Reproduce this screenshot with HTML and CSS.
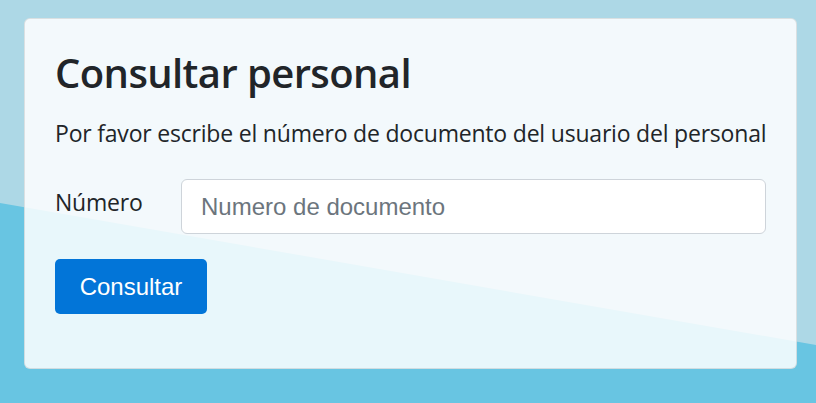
FILE: index.html
```html
<!DOCTYPE html>
<html lang="es">
<head>
<meta charset="utf-8">
<title>Consultar personal</title>
<link rel="stylesheet" href="styles.css">
</head>
<body>
<main class="page">
  <section class="card">
    <h1 class="title">Consultar personal</h1>
    <p class="lead">Por favor escribe el número de documento del usuario del personal</p>
    <form class="form">
      <div class="row">
        <label class="label" for="num">Número</label>
        <input class="input" id="num" type="text" placeholder="Numero de documento">
      </div>
      <button class="btn" type="button">Consultar</button>
    </form>
  </section>
</main>
</body>
</html>
```

FILE: styles.css
```css
html, body {
  margin: 0;
  padding: 0;
  height: 100%;
}
body {
  background-color: #add8e6;
  font-family: "Open Sans", "Noto Sans", sans-serif;
  color: #212529;
  overflow: hidden;
}
.page {
  position: relative;
  height: 403px;
  padding: 18px 19px 0 24px;
  box-sizing: border-box;
  background: #add8e6;
}
.page::before {
  content: "";
  position: absolute;
  left: 0;
  right: 0;
  bottom: 0;
  top: 0;
  background: #68c5e2;
  clip-path: polygon(0 203px, 100% 345px, 100% 100%, 0 100%);
}
.card {
  position: relative;
  background: rgba(255, 255, 255, 0.85);
  border: 1px solid rgba(0, 0, 0, 0.1);
  border-radius: 6px;
  padding: 30px 30px 0 30px;
  height: 351px;
  box-sizing: border-box;
}
.title {
  margin: 0;
  font-size: 40px;
  font-weight: 600;
  line-height: 48px;
  letter-spacing: -0.6px;
}
.lead {
  margin: 19px 0 0;
  font-size: 23px;
  line-height: 34px;
  letter-spacing: -0.2px;
  white-space: nowrap;
}
.form {
  margin: 0;
  padding-top: 29px;
}
.row {
  display: flex;
  align-items: flex-start;
}
.label {
  width: 126px;
  flex: none;
  font-size: 23px;
  line-height: 34px;
  padding-top: 6px;
  letter-spacing: -0.2px;
}
.input {
  flex: 1;
  min-width: 0;
  height: 55px;
  box-sizing: border-box;
  border: 1px solid #ced4da;
  border-radius: 6px;
  background: #fff;
  padding: 0 19px;
  font-family: "Liberation Sans", Arial, sans-serif;
  font-size: 24px;
  color: #495057;
  outline: none;
}
.input::placeholder {
  color: #6c757d;
}
.btn {
  display: block;
  margin-top: 25px;
  width: 152px;
  height: 55px;
  border: none;
  border-radius: 5px;
  background: #0275d8;
  color: #fff;
  font-family: "Liberation Sans", Arial, sans-serif;
  font-size: 24px;
  padding: 0;
}
```
